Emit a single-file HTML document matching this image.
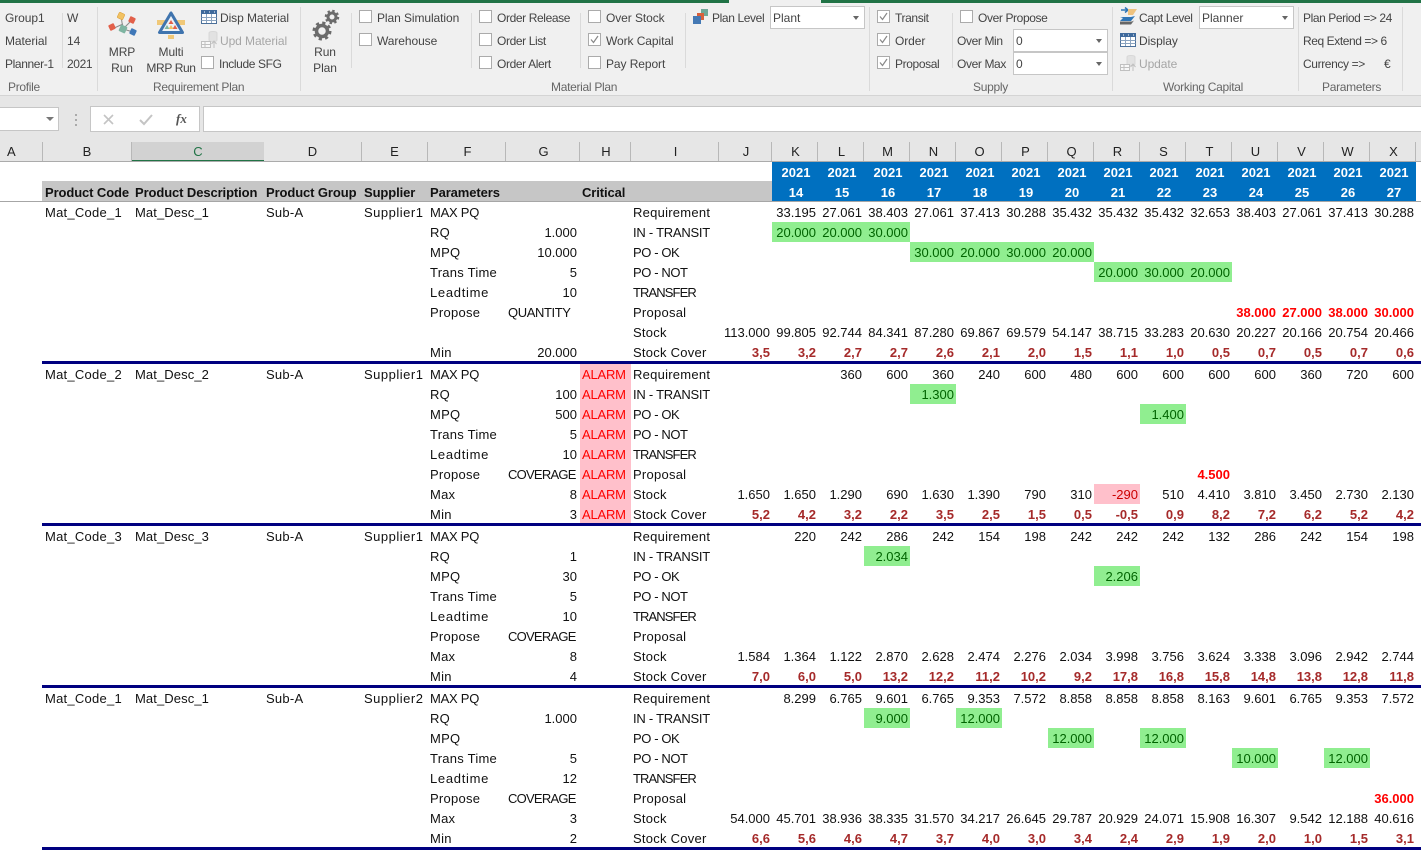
<!DOCTYPE html>
<html><head><meta charset="utf-8"><title>MRP Plan</title>
<style>
html,body{margin:0;padding:0;width:1421px;height:867px;overflow:hidden;background:#fff;font-family:"Liberation Sans",sans-serif}
.a{position:absolute}
#rib{left:0;top:0;width:1421px;height:95px;background:#f0f0f0;border-bottom:1px solid #d4d4d4}
.t{position:absolute;font-size:12px;line-height:16px;color:#444;white-space:nowrap;letter-spacing:-.08px}
.c{transform:translateX(-50%);text-align:center}
.g{color:#666;letter-spacing:-.3px}.d{color:#a6a6a6}
.w{letter-spacing:-.38px}
.sp{position:absolute;width:1px;background:#dadada}
.cb{position:absolute;width:11px;height:11px;border:1px solid #ababab;background:#fff}
.cb svg{position:absolute;left:0;top:0}
.dd{position:absolute;width:93px;height:21px;background:#fff;border:1px solid #c6c6c6;font-size:12px;line-height:23px;color:#444;text-indent:2px}
.dd:after{content:"";position:absolute;right:5px;top:9px;border:3px solid transparent;border-top:4px solid #666;border-bottom:0}
#col div{position:absolute;top:142px;height:19px;line-height:20px;font-size:13px;color:#222;text-align:center;border-right:1px solid #b8b8b8;box-sizing:border-box}
#col div:nth-child(n+6){padding-left:2px}
table{position:absolute;left:0;top:162px;border-spacing:0;border-collapse:separate;table-layout:fixed;width:1421px;font-size:13px;color:#111}
td{height:20px;padding:2px 2px 0 3px;line-height:18px;white-space:nowrap;overflow:visible;box-sizing:border-box}
td:nth-child(2),td:nth-child(4),td:nth-child(6),td:nth-child(9){letter-spacing:.25px}
td:nth-child(3){letter-spacing:.1px}
td:nth-child(5){letter-spacing:.5px}
td:nth-child(4),td:nth-child(5),td:nth-child(6),td:nth-child(9){padding-left:2px}
td:nth-child(n+10){text-align:right;padding-left:0;padding-right:2px}
td:nth-child(7){text-align:right;padding-right:3px}
td:nth-child(8){padding-left:2px;padding-right:0}
td.p{text-align:left;padding-left:2px;letter-spacing:-.75px}
td.q{text-align:left;padding-left:2px;letter-spacing:-.4px}
td.x{background:#ffc0cb;color:#f00;letter-spacing:-.2px}
td.y{background:#90ee90;color:#006400}
td.r{color:#f00;font-weight:bold}
.k td:nth-child(n+10){color:#a52a2a;font-weight:bold}
td.n{background:#ffc0cb;color:#c00}
td.u1{letter-spacing:-.25px}
td.u2{letter-spacing:-.4px}
td.u3{letter-spacing:-.9px}
td.l{letter-spacing:.7px}
.s td{height:2px;line-height:0;padding:0;font-size:0}
.h td{background:#c6c6c6;font-weight:bold;color:#111;letter-spacing:-.1px}
.h td:first-child{background:#fff}
td.b2{background:#0070c0!important;color:#fff!important;font-weight:bold;text-align:center!important;padding:2px 0 0 2px!important;letter-spacing:0!important}
.nv{position:absolute;left:42px;width:1379px;height:3px;background:#000080}
</style></head><body>

<div class="a" style="left:0;top:96px;width:1421px;height:65px;background:#e6e6e6"></div>
<div class="a" id="rib"></div>
<div class="a" style="left:0;top:0;width:729px;height:3px;background:#217346"></div>
<div class="a" style="left:821px;top:0;width:600px;height:3px;background:#217346"></div>

<!-- separators -->
<div class="sp" style="left:62px;top:13px;height:55px"></div>
<div class="sp" style="left:97px;top:7px;height:84px"></div>
<div class="sp" style="left:300px;top:7px;height:84px"></div>
<div class="sp" style="left:351px;top:13px;height:55px"></div>
<div class="sp" style="left:471px;top:13px;height:55px"></div>
<div class="sp" style="left:580px;top:13px;height:55px"></div>
<div class="sp" style="left:685px;top:13px;height:55px"></div>
<div class="sp" style="left:869px;top:7px;height:84px"></div>
<div class="sp" style="left:952px;top:13px;height:55px"></div>
<div class="sp" style="left:1112px;top:7px;height:84px"></div>
<div class="sp" style="left:1298px;top:7px;height:84px"></div>
<div class="sp" style="left:1402px;top:7px;height:84px"></div>

<!-- ribbon text -->
<div class="t" style="left:5px;top:10px">Group1</div>
<div class="t" style="left:5px;top:33px">Material</div>
<div class="t w" style="left:5px;top:56px">Planner-1</div>
<div class="t" style="left:67px;top:10px">W</div>
<div class="t" style="left:67px;top:33px">14</div>
<div class="t w" style="left:67px;top:56px">2021</div>
<div class="t g" style="left:8px;top:79px">Profile</div>
<div class="t c" style="left:122px;top:44px">MRP</div>
<div class="t c" style="left:122px;top:60px">Run</div>
<div class="t c" style="left:171px;top:44px">Multi</div>
<div class="t c w" style="left:171px;top:60px">MRP Run</div>
<div class="t" style="left:220px;top:10px">Disp Material</div>
<div class="t d" style="left:220px;top:33px">Upd Material</div>
<div class="t w" style="left:219px;top:56px">Include SFG</div>
<div class="t g" style="left:153px;top:79px">Requirement Plan</div>
<div class="t c" style="left:325px;top:44px">Run</div>
<div class="t c" style="left:325px;top:60px">Plan</div>
<div class="t" style="left:377px;top:10px">Plan Simulation</div>
<div class="t" style="left:377px;top:33px">Warehouse</div>
<div class="t w" style="left:497px;top:10px">Order Release</div>
<div class="t w" style="left:497px;top:33px">Order List</div>
<div class="t w" style="left:497px;top:56px">Order Alert</div>
<div class="t" style="left:606px;top:10px">Over Stock</div>
<div class="t" style="left:606px;top:33px">Work Capital</div>
<div class="t" style="left:606px;top:56px">Pay Report</div>
<div class="t g" style="left:551px;top:79px">Material Plan</div>
<div class="t w" style="left:712px;top:10px">Plan Level</div>
<div class="t w" style="left:895px;top:10px">Transit</div>
<div class="t" style="left:895px;top:33px">Order</div>
<div class="t w" style="left:895px;top:56px">Proposal</div>
<div class="t w" style="left:978px;top:10px">Over Propose</div>
<div class="t w" style="left:957px;top:33px">Over Min</div>
<div class="t w" style="left:957px;top:56px">Over Max</div>
<div class="t g" style="left:973px;top:79px">Supply</div>
<div class="t w" style="left:1139px;top:10px">Capt Level</div>
<div class="t" style="left:1139px;top:33px">Display</div>
<div class="t d" style="left:1139px;top:56px">Update</div>
<div class="t g" style="left:1163px;top:79px">Working Capital</div>
<div class="t" style="left:1303px;top:10px;letter-spacing:-.42px">Plan Period =&gt; 24</div>
<div class="t" style="left:1303px;top:33px;letter-spacing:-.42px">Req Extend =&gt; 6</div>
<div class="t w" style="left:1303px;top:56px">Currency =&gt;</div>
<div class="t" style="left:1384px;top:56px">€</div>
<div class="t g" style="left:1322px;top:79px">Parameters</div>

<!-- checkboxes -->
<div class="cb" style="left:201px;top:56px"></div>
<div class="cb" style="left:359px;top:10px"></div>
<div class="cb" style="left:359px;top:33px"></div>
<div class="cb" style="left:479px;top:10px"></div>
<div class="cb" style="left:479px;top:33px"></div>
<div class="cb" style="left:479px;top:56px"></div>
<div class="cb" style="left:588px;top:10px"></div>
<div class="cb" style="left:588px;top:33px"><svg width="11" height="11"><path d="M2 5.500l2.500 3L9 2" fill="none" stroke="#888" stroke-width="1.200"/></svg></div>
<div class="cb" style="left:588px;top:56px"></div>
<div class="cb" style="left:877px;top:10px"><svg width="11" height="11"><path d="M2 5.500l2.500 3L9 2" fill="none" stroke="#888" stroke-width="1.200"/></svg></div>
<div class="cb" style="left:877px;top:33px"><svg width="11" height="11"><path d="M2 5.500l2.500 3L9 2" fill="none" stroke="#888" stroke-width="1.200"/></svg></div>
<div class="cb" style="left:877px;top:56px"><svg width="11" height="11"><path d="M2 5.500l2.500 3L9 2" fill="none" stroke="#888" stroke-width="1.200"/></svg></div>
<div class="cb" style="left:960px;top:10px"></div>

<!-- dropdowns -->
<div class="dd" style="left:770px;top:6px">Plant</div>
<div class="dd" style="left:1013px;top:29px">0</div>
<div class="dd" style="left:1013px;top:52px">0</div>
<div class="dd" style="left:1199px;top:6px">Planner</div>

<!-- ribbon icons -->
<svg class="a" style="left:0;top:0" width="1421" height="95">
 <!-- MRP -->
 <g stroke="#8a8a8a" stroke-width="1" fill="none"><path d="M121 16L123 29M132 20L123 29M112 29L123 24M123 29L133 32"/></g>
 <g transform="rotate(25 121 16)"><rect x="118" y="13" width="6" height="6" rx="1" fill="#f2c262" stroke="#dca23c" stroke-width=".6"/></g>
 <g transform="rotate(-25 112 27)"><rect x="109" y="24" width="6" height="6" rx="1" fill="#e2604a"/></g>
 <g transform="rotate(25 132 20)"><rect x="129" y="17" width="6" height="6" rx="1" fill="#e2604a"/></g>
 <g transform="rotate(25 123 29)"><rect x="119.500" y="25.500" width="7" height="7" rx="1" fill="#7fb5a2"/></g>
 <g transform="rotate(25 133 32)"><rect x="130" y="29" width="6" height="6" rx="1" fill="#3f78b8"/></g>
 <!-- Multi -->
 <rect x="157" y="20" width="8" height="5" fill="#f0c878"/><rect x="177" y="20" width="8" height="5" fill="#f0c878"/><rect x="168" y="35" width="6" height="4" fill="#f0c878"/>
 <path d="M171 13L159.500 32.500H182.500Z" fill="#eef2f6" stroke="#3f74ae" stroke-width="3" stroke-linejoin="round"/>
 <path d="M171 20l2.500 4h-5z" fill="#e2604a"/><path d="M167 25l2.500 4h-5z" fill="#7fb5a2"/><path d="M175 25l2.500 4h-5z" fill="#e2604a"/><path d="M171 25l2.500 4h-5z" fill="#f2c262"/>
 <!-- Disp table -->
 <g><rect x="201.500" y="10.500" width="15" height="13" fill="#fff" stroke="#4a6f99"/><rect x="201" y="10" width="16" height="4" fill="#3f6a9c"/><path d="M201.500 17.500h15M201.500 20.500h15M206.500 14v9M211.500 14v9" stroke="#8aa3bf" fill="none"/><path d="M204 12h1M209 12h1M214 12h1" stroke="#fff"/></g>
 <!-- Upd material -->
 <g opacity=".55"><path d="M209 33c0-2 8-2 8 0v7c0 2-8 2-8 0z" fill="#d8d8d8" stroke="#c4c4c4"/><rect x="201.500" y="41.500" width="9" height="6" fill="#fff" stroke="#999"/><path d="M201.500 44.500h9M205 42v5M214 48v-6M211.500 44l2.500-3 2.500 3" fill="none" stroke="#999"/></g>
 <!-- Gears -->
 <g fill="none" stroke="#6b6b6b"><circle cx="322" cy="31" r="5.500" stroke-width="3.500"/><circle cx="322" cy="31" r="8" stroke-width="3" stroke-dasharray="3.140 3.140"/><circle cx="332" cy="17" r="4" stroke-width="3"/><circle cx="332" cy="17" r="6" stroke-width="2.500" stroke-dasharray="2.360 2.360"/></g>
 <!-- Plan level -->
 <rect x="701" y="9" width="7" height="7" fill="#6fa898"/><rect x="697" y="13" width="7" height="7" fill="#d8603c"/><rect x="693" y="16" width="8" height="8" fill="#4479b4"/>
 <!-- Capt level -->
 <path d="M1121 10h7M1125 7.500l3 2.500-3 2.500" fill="none" stroke="#2e75b6" stroke-width="1.500"/>
 <path d="M1128 9h9l-4 6h-5z" fill="#eec27e"/><path d="M1120 17h11l4-1-4 5h-11l3-3z" fill="#2e75b6"/><path d="M1120 21.500h12l2-1-3 4h-11z" fill="#666"/>
 <!-- Display -->
 <rect x="1120.500" y="33.500" width="15" height="13" fill="#fff" stroke="#4a6f99"/><rect x="1120" y="33" width="16" height="4" fill="#3f6a9c"/><path d="M1120.500 40.500h15M1120.500 43.500h15M1125.500 37v9M1130.500 37v9" stroke="#8aa3bf" fill="none"/><path d="M1123 35h1M1128 35h1M1133 35h1" stroke="#fff"/>
 <!-- Update -->
 <g opacity=".55"><path d="M1127 57c0-2 8-2 8 0v7c0 2-8 2-8 0z" fill="#d8d8d8" stroke="#c4c4c4"/><rect x="1120.500" y="64.500" width="9" height="6" fill="#fff" stroke="#999"/><path d="M1120.500 67.500h9M1124 65v5M1133 71v-6M1130.500 67l2.500-3 2.500 3" fill="none" stroke="#999"/></g>
</svg>

<!-- formula bar -->
<div class="a" style="left:0;top:107px;width:59px;height:24px;background:#fff;border:1px solid #c6c6c6;border-left:0;box-sizing:border-box"></div>
<div class="a" style="left:46px;top:117px;border:4px solid transparent;border-top:4px solid #777;border-bottom:0"></div>
<div class="a" style="left:75px;top:114px;width:2px;height:2px;background:#aaa;box-shadow:0 5px #aaa,0 10px #aaa"></div>
<div class="a" style="left:90px;top:106px;width:110px;height:26px;background:#fff;border:1px solid #c6c6c6;box-sizing:border-box"></div>
<div class="a" style="left:203px;top:106px;width:1218px;height:26px;background:#fff;border:1px solid #c6c6c6;border-right:0;box-sizing:border-box"></div>
<svg class="a" style="left:100px;top:110px" width="90" height="20"><path d="M4 5l9 9M13 5l-9 9" stroke="#c4c4c4" stroke-width="1.600" fill="none"/><path d="M40 10l4 4 8-9" stroke="#c4c4c4" stroke-width="2" fill="none"/></svg>
<div class="a" style="left:176px;top:110px;font:italic bold 13px 'Liberation Serif',serif;color:#555;line-height:18px">fx</div>

<!-- column headers -->
<div id="col">
<div style="left:0;width:43px;text-align:left;padding-left:7px">A</div>
<div style="left:43px;width:89px">B</div>
<div style="left:132px;width:132px;background:#d2d2d2;border-bottom:2px solid #217346;color:#217346;height:20px;border-right:0">C</div>
<div style="left:264px;width:98px">D</div>
<div style="left:362px;width:66px">E</div>
<div style="left:428px;width:78px">F</div>
<div style="left:506px;width:74px">G</div>
<div style="left:580px;width:51px">H</div>
<div style="left:631px;width:88px">I</div>
<div style="left:719px;width:53px">J</div>
<div style="left:772px;width:46px">K</div><div style="left:818px;width:46px">L</div><div style="left:864px;width:46px">M</div><div style="left:910px;width:46px">N</div><div style="left:956px;width:46px">O</div><div style="left:1002px;width:46px">P</div><div style="left:1048px;width:46px">Q</div><div style="left:1094px;width:46px">R</div><div style="left:1140px;width:46px">S</div><div style="left:1186px;width:46px">T</div><div style="left:1232px;width:46px">U</div><div style="left:1278px;width:46px">V</div><div style="left:1324px;width:46px">W</div><div style="left:1370px;width:46px">X</div>
</div>
<div class="a" style="left:0;top:161px;width:1421px;height:1px;background:#ababab"></div>

<table><colgroup><col style="width:42px"><col style="width:90px"><col style="width:132px"><col style="width:98px"><col style="width:66px"><col style="width:78px"><col style="width:74px"><col style="width:51px"><col style="width:88px"><col style="width:53px"><col style="width:46px"><col style="width:46px"><col style="width:46px"><col style="width:46px"><col style="width:46px"><col style="width:46px"><col style="width:46px"><col style="width:46px"><col style="width:46px"><col style="width:46px"><col style="width:46px"><col style="width:46px"><col style="width:46px"><col style="width:46px"><col style="width:5px"></colgroup>
<tr><td colspan="10" style="background:#fff"></td><td class="b2">2021</td><td class="b2">2021</td><td class="b2">2021</td><td class="b2">2021</td><td class="b2">2021</td><td class="b2">2021</td><td class="b2">2021</td><td class="b2">2021</td><td class="b2">2021</td><td class="b2">2021</td><td class="b2">2021</td><td class="b2">2021</td><td class="b2">2021</td><td class="b2">2021</td></tr>
<tr class="h"><td></td><td>Product Code</td><td>Product Description</td><td>Product Group</td><td>Supplier</td><td>Parameters</td><td></td><td>Critical</td><td></td><td></td><td class="b2">14</td><td class="b2">15</td><td class="b2">16</td><td class="b2">17</td><td class="b2">18</td><td class="b2">19</td><td class="b2">20</td><td class="b2">21</td><td class="b2">22</td><td class="b2">23</td><td class="b2">24</td><td class="b2">25</td><td class="b2">26</td><td class="b2">27</td><td style="background:#fff"></td></tr>

<tr><td></td><td>Mat_Code_1</td><td>Mat_Desc_1</td><td>Sub-A</td><td>Supplier1</td><td class="u1">MAX PQ</td><td></td><td></td><td>Requirement</td><td></td><td>33.195</td><td>27.061</td><td>38.403</td><td>27.061</td><td>37.413</td><td>30.288</td><td>35.432</td><td>35.432</td><td>35.432</td><td>32.653</td><td>38.403</td><td>27.061</td><td>37.413</td><td>30.288</td></tr>
<tr><td></td><td></td><td></td><td></td><td></td><td>RQ</td><td>1.000</td><td></td><td class="u1">IN - TRANSIT</td><td></td><td class="y">20.000</td><td class="y">20.000</td><td class="y">30.000</td><td></td><td></td><td></td><td></td><td></td><td></td><td></td><td></td><td></td><td></td><td></td></tr>
<tr><td></td><td></td><td></td><td></td><td></td><td>MPQ</td><td>10.000</td><td></td><td class="u2">PO - OK</td><td></td><td></td><td></td><td></td><td class="y">30.000</td><td class="y">20.000</td><td class="y">30.000</td><td class="y">20.000</td><td></td><td></td><td></td><td></td><td></td><td></td><td></td></tr>
<tr><td></td><td></td><td></td><td></td><td></td><td>Trans Time</td><td>5</td><td></td><td class="u2">PO - NOT</td><td></td><td></td><td></td><td></td><td></td><td></td><td></td><td></td><td class="y">20.000</td><td class="y">30.000</td><td class="y">20.000</td><td></td><td></td><td></td><td></td></tr>
<tr><td></td><td></td><td></td><td></td><td></td><td class="l">Leadtime</td><td>10</td><td></td><td class="u3">TRANSFER</td></tr>
<tr><td></td><td></td><td></td><td></td><td></td><td>Propose</td><td class="q">QUANTITY</td><td></td><td>Proposal</td><td></td><td></td><td></td><td></td><td></td><td></td><td></td><td></td><td></td><td></td><td></td><td class="r">38.000</td><td class="r">27.000</td><td class="r">38.000</td><td class="r">30.000</td></tr>
<tr><td></td><td></td><td></td><td></td><td></td><td></td><td></td><td></td><td>Stock</td><td>113.000</td><td>99.805</td><td>92.744</td><td>84.341</td><td>87.280</td><td>69.867</td><td>69.579</td><td>54.147</td><td>38.715</td><td>33.283</td><td>20.630</td><td>20.227</td><td>20.166</td><td>20.754</td><td>20.466</td></tr>
<tr class="k"><td></td><td></td><td></td><td></td><td></td><td>Min</td><td>20.000</td><td></td><td>Stock Cover</td><td>3,5</td><td>3,2</td><td>2,7</td><td>2,7</td><td>2,6</td><td>2,1</td><td>2,0</td><td>1,5</td><td>1,1</td><td>1,0</td><td>0,5</td><td>0,7</td><td>0,5</td><td>0,7</td><td>0,6</td></tr>
<tr class="s"><td colspan="25"></td></tr>

<tr><td></td><td>Mat_Code_2</td><td>Mat_Desc_2</td><td>Sub-A</td><td>Supplier1</td><td class="u1">MAX PQ</td><td></td><td class="x">ALARM</td><td>Requirement</td><td></td><td></td><td>360</td><td>600</td><td>360</td><td>240</td><td>600</td><td>480</td><td>600</td><td>600</td><td>600</td><td>600</td><td>360</td><td>720</td><td>600</td></tr>
<tr><td></td><td></td><td></td><td></td><td></td><td>RQ</td><td>100</td><td class="x">ALARM</td><td class="u1">IN - TRANSIT</td><td></td><td></td><td></td><td></td><td class="y">1.300</td><td></td><td></td><td></td><td></td><td></td><td></td><td></td><td></td><td></td><td></td></tr>
<tr><td></td><td></td><td></td><td></td><td></td><td>MPQ</td><td>500</td><td class="x">ALARM</td><td class="u2">PO - OK</td><td></td><td></td><td></td><td></td><td></td><td></td><td></td><td></td><td></td><td class="y">1.400</td><td></td><td></td><td></td><td></td><td></td></tr>
<tr><td></td><td></td><td></td><td></td><td></td><td>Trans Time</td><td>5</td><td class="x">ALARM</td><td class="u2">PO - NOT</td></tr>
<tr><td></td><td></td><td></td><td></td><td></td><td class="l">Leadtime</td><td>10</td><td class="x">ALARM</td><td class="u3">TRANSFER</td></tr>
<tr><td></td><td></td><td></td><td></td><td></td><td>Propose</td><td class="p">COVERAGE</td><td class="x">ALARM</td><td>Proposal</td><td></td><td></td><td></td><td></td><td></td><td></td><td></td><td></td><td></td><td></td><td class="r">4.500</td><td></td><td></td><td></td><td></td></tr>
<tr><td></td><td></td><td></td><td></td><td></td><td>Max</td><td>8</td><td class="x">ALARM</td><td>Stock</td><td>1.650</td><td>1.650</td><td>1.290</td><td>690</td><td>1.630</td><td>1.390</td><td>790</td><td>310</td><td class="n">-290</td><td>510</td><td>4.410</td><td>3.810</td><td>3.450</td><td>2.730</td><td>2.130</td></tr>
<tr class="k"><td></td><td></td><td></td><td></td><td></td><td>Min</td><td>3</td><td class="x">ALARM</td><td>Stock Cover</td><td>5,2</td><td>4,2</td><td>3,2</td><td>2,2</td><td>3,5</td><td>2,5</td><td>1,5</td><td>0,5</td><td>-0,5</td><td>0,9</td><td>8,2</td><td>7,2</td><td>6,2</td><td>5,2</td><td>4,2</td></tr>
<tr class="s"><td colspan="25"></td></tr>

<tr><td></td><td>Mat_Code_3</td><td>Mat_Desc_3</td><td>Sub-A</td><td>Supplier1</td><td class="u1">MAX PQ</td><td></td><td></td><td>Requirement</td><td></td><td>220</td><td>242</td><td>286</td><td>242</td><td>154</td><td>198</td><td>242</td><td>242</td><td>242</td><td>132</td><td>286</td><td>242</td><td>154</td><td>198</td></tr>
<tr><td></td><td></td><td></td><td></td><td></td><td>RQ</td><td>1</td><td></td><td class="u1">IN - TRANSIT</td><td></td><td></td><td></td><td class="y">2.034</td><td></td><td></td><td></td><td></td><td></td><td></td><td></td><td></td><td></td><td></td><td></td></tr>
<tr><td></td><td></td><td></td><td></td><td></td><td>MPQ</td><td>30</td><td></td><td class="u2">PO - OK</td><td></td><td></td><td></td><td></td><td></td><td></td><td></td><td></td><td class="y">2.206</td><td></td><td></td><td></td><td></td><td></td><td></td></tr>
<tr><td></td><td></td><td></td><td></td><td></td><td>Trans Time</td><td>5</td><td></td><td class="u2">PO - NOT</td></tr>
<tr><td></td><td></td><td></td><td></td><td></td><td class="l">Leadtime</td><td>10</td><td></td><td class="u3">TRANSFER</td></tr>
<tr><td></td><td></td><td></td><td></td><td></td><td>Propose</td><td class="p">COVERAGE</td><td></td><td>Proposal</td></tr>
<tr><td></td><td></td><td></td><td></td><td></td><td>Max</td><td>8</td><td></td><td>Stock</td><td>1.584</td><td>1.364</td><td>1.122</td><td>2.870</td><td>2.628</td><td>2.474</td><td>2.276</td><td>2.034</td><td>3.998</td><td>3.756</td><td>3.624</td><td>3.338</td><td>3.096</td><td>2.942</td><td>2.744</td></tr>
<tr class="k"><td></td><td></td><td></td><td></td><td></td><td>Min</td><td>4</td><td></td><td>Stock Cover</td><td>7,0</td><td>6,0</td><td>5,0</td><td>13,2</td><td>12,2</td><td>11,2</td><td>10,2</td><td>9,2</td><td>17,8</td><td>16,8</td><td>15,8</td><td>14,8</td><td>13,8</td><td>12,8</td><td>11,8</td></tr>
<tr class="s"><td colspan="25"></td></tr>

<tr><td></td><td>Mat_Code_1</td><td>Mat_Desc_1</td><td>Sub-A</td><td>Supplier2</td><td class="u1">MAX PQ</td><td></td><td></td><td>Requirement</td><td></td><td>8.299</td><td>6.765</td><td>9.601</td><td>6.765</td><td>9.353</td><td>7.572</td><td>8.858</td><td>8.858</td><td>8.858</td><td>8.163</td><td>9.601</td><td>6.765</td><td>9.353</td><td>7.572</td></tr>
<tr><td></td><td></td><td></td><td></td><td></td><td>RQ</td><td>1.000</td><td></td><td class="u1">IN - TRANSIT</td><td></td><td></td><td></td><td class="y">9.000</td><td></td><td class="y">12.000</td><td></td><td></td><td></td><td></td><td></td><td></td><td></td><td></td><td></td></tr>
<tr><td></td><td></td><td></td><td></td><td></td><td>MPQ</td><td></td><td></td><td class="u2">PO - OK</td><td></td><td></td><td></td><td></td><td></td><td></td><td></td><td class="y">12.000</td><td></td><td class="y">12.000</td><td></td><td></td><td></td><td></td><td></td></tr>
<tr><td></td><td></td><td></td><td></td><td></td><td>Trans Time</td><td>5</td><td></td><td class="u2">PO - NOT</td><td></td><td></td><td></td><td></td><td></td><td></td><td></td><td></td><td></td><td></td><td></td><td class="y">10.000</td><td></td><td class="y">12.000</td><td></td></tr>
<tr><td></td><td></td><td></td><td></td><td></td><td class="l">Leadtime</td><td>12</td><td></td><td class="u3">TRANSFER</td></tr>
<tr><td></td><td></td><td></td><td></td><td></td><td>Propose</td><td class="p">COVERAGE</td><td></td><td>Proposal</td><td></td><td></td><td></td><td></td><td></td><td></td><td></td><td></td><td></td><td></td><td></td><td></td><td></td><td></td><td class="r">36.000</td></tr>
<tr><td></td><td></td><td></td><td></td><td></td><td>Max</td><td>3</td><td></td><td>Stock</td><td>54.000</td><td>45.701</td><td>38.936</td><td>38.335</td><td>31.570</td><td>34.217</td><td>26.645</td><td>29.787</td><td>20.929</td><td>24.071</td><td>15.908</td><td>16.307</td><td>9.542</td><td>12.188</td><td>40.616</td></tr>
<tr class="k"><td></td><td></td><td></td><td></td><td></td><td>Min</td><td>2</td><td></td><td>Stock Cover</td><td>6,6</td><td>5,6</td><td>4,6</td><td>4,7</td><td>3,7</td><td>4,0</td><td>3,0</td><td>3,4</td><td>2,4</td><td>2,9</td><td>1,9</td><td>2,0</td><td>1,0</td><td>1,5</td><td>3,1</td></tr>
</table>

<div class="a" style="left:42px;top:181px;width:730px;height:1px;background:#c6c6c6"></div>
<div class="a" style="left:0;top:201px;width:1421px;height:1px;background:#a6a6a6"></div>
<div class="nv" style="top:361px"></div>
<div class="nv" style="top:523px"></div>
<div class="nv" style="top:685px"></div>
<div class="nv" style="top:847px"></div>
</body></html>
